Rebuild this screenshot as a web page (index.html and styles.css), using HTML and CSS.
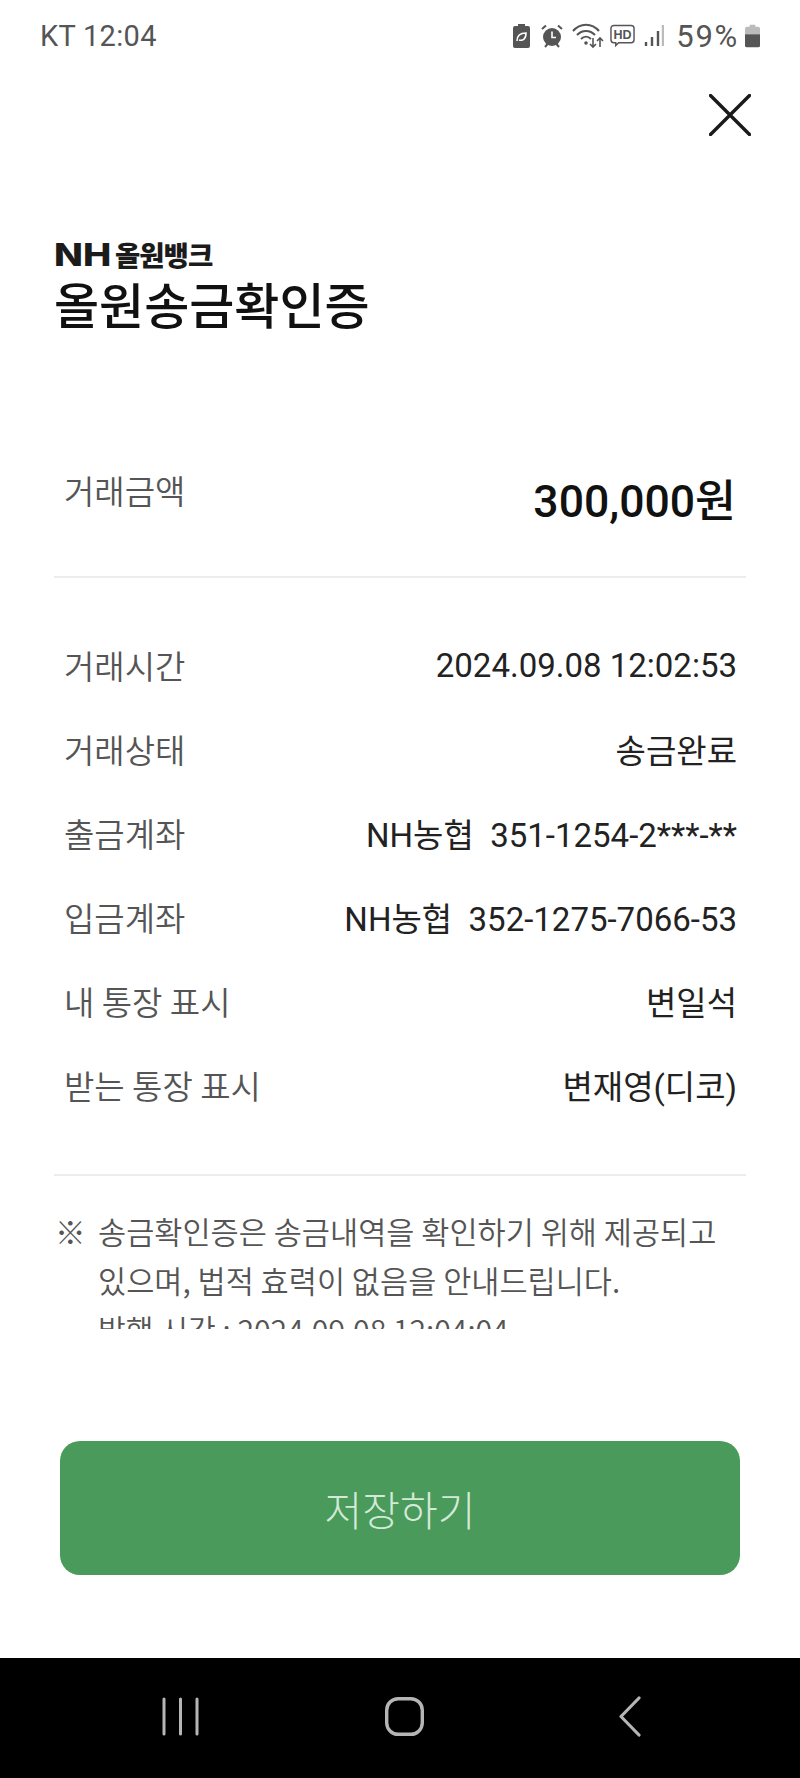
FILE: index.html
```html
<!DOCTYPE html>
<html>
<head>
<meta charset="UTF-8">
<title>올원송금확인증</title>
<link rel="stylesheet" href="styles.css">
</head>
<body>
<div class="screen">
  <div class="status">
    <span class="carrier">KT 12:04</span>
    <div class="status-icons">
      <svg class="ic ic-leaf" width="17" height="24" viewBox="0 0 17 24"><path d="M5 0h7v2h3a2 2 0 0 1 2 2v18a2 2 0 0 1-2 2H2a2 2 0 0 1-2-2V4a2 2 0 0 1 2-2h3z" fill="#555"/><path d="M4 17c0-5 3-8 9-8 0 6-3 8-7 7" fill="none" stroke="#fff" stroke-width="1.6"/></svg>
      <svg class="ic ic-clock" width="22" height="24" viewBox="0 0 22 24"><circle cx="11" cy="13" r="9" fill="#555"/><path d="M11 7.5v6h4" fill="none" stroke="#fff" stroke-width="1.6"/><path d="M1 5l4-3.500M21 5l-4-3.500M4 23l2.500-3M18 23l-2.500-3" stroke="#555" stroke-width="2"/></svg>
      <svg class="ic ic-wifi" width="32" height="26" viewBox="0 0 32 26"><path d="M1 8c7-8.500 19-8.500 26 0M5 12c5-5.500 13-5.500 18 0M9 16c3-3 7-3 10 0" fill="none" stroke="#555" stroke-width="2"/><circle cx="14" cy="20" r="1.8" fill="#555"/><path d="M21 15v9m-3-3 3 3 3-3M28 24v-9m-3 3 3-3 3 3" fill="none" stroke="#555" stroke-width="1.6"/></svg>
      <svg class="ic ic-hd" width="25" height="24" viewBox="0 0 26 24"><path d="M4 1h18a3 3 0 0 1 3 3v12a3 3 0 0 1-3 3H9l-3 3v-3H4a3 3 0 0 1-3-3V4a3 3 0 0 1 3-3z" fill="none" stroke="#555" stroke-width="1.5"/><text class="hd" x="13" y="15" text-anchor="middle">HD</text></svg>
      <svg class="ic ic-signal" width="20" height="22" viewBox="0 0 20 22"><path d="M2 17v4M8 12v9M14 6v15" stroke="#555" stroke-width="2.4"/><path d="M19 0v21" stroke="#bbb" stroke-width="2.4"/></svg>
      <span class="battery-text">59%</span>
      <svg class="ic" width="15" height="24" viewBox="0 0 16 24"><path d="M5 0h6v2h3a2 2 0 0 1 2 2v6H0V4a2 2 0 0 1 2-2h3z" fill="#bbb"/><path d="M0 10h16v12a2 2 0 0 1-2 2H2a2 2 0 0 1-2-2z" fill="#555"/></svg>
    </div>
  </div>

  <div class="close-row">
    <svg width="42" height="42" viewBox="0 0 42 42"><path d="M1.500 1.500l39 39M40.500 1.500l-39 39" stroke="#1a1a1a" stroke-width="3.4" stroke-linecap="round"/></svg>
  </div>

  <div class="head">
    <div class="logo"><span class="logo-nh">NH</span><span class="logo-ko">올원뱅크</span></div>
    <h1 class="title">올원송금확인증</h1>
  </div>

  <div class="amount-row">
    <span class="label">거래금액</span>
    <span class="amount">300,000원</span>
  </div>

  <div class="detail">
    <div class="row"><span class="label">거래시간</span><span class="value">2024.09.08 12:02:53</span></div>
    <div class="row"><span class="label">거래상태</span><span class="value">송금완료</span></div>
    <div class="row"><span class="label">출금계좌</span><span class="value">NH농협&nbsp; 351-1254-2***-**</span></div>
    <div class="row"><span class="label">입금계좌</span><span class="value">NH농협&nbsp; 352-1275-7066-53</span></div>
    <div class="row"><span class="label">내 통장 표시</span><span class="value">변일석</span></div>
    <div class="row"><span class="label">받는 통장 표시</span><span class="value">변재영(디코)</span></div>
  </div>

  <div class="note">
    <span class="note-mark">※</span>
    <p class="note-text">송금확인증은 송금내역을 확인하기 위해 제공되고 있으며, 법적 효력이 없음을 안내드립니다.<br><span class="note-time">발행 시간 : 2024.09.08 12:04:04</span></p>
  </div>

  <div class="btn-wrap"><div class="save-btn">저장하기</div></div>

  <div class="nav">
    <svg width="37" height="39" viewBox="0 0 37 39"><path d="M2 2v35M18.500 2v35M35 2v35" stroke="#b5b5b5" stroke-width="3" stroke-linecap="round"/></svg>
    <svg width="39" height="39" viewBox="0 0 39 39"><rect x="1.700" y="1.700" width="35.600" height="35.600" rx="11.500" fill="none" stroke="#b5b5b5" stroke-width="3.4"/></svg>
    <svg class="nav-back" width="22" height="41" viewBox="0 0 22 41"><path d="M20 2L2 20.500 20 39" fill="none" stroke="#b5b5b5" stroke-width="3.2" stroke-linecap="round" stroke-linejoin="round"/></svg>
  </div>
</div>
</body>
</html>
```

FILE: styles.css
```css
*{ margin: 0; padding: 0; box-sizing: border-box; }
body{ width: 800px; height: 1778px; background: #fff; overflow: hidden; font-family: "Noto Sans CJK KR", "Noto Sans", sans-serif; color: #222; }
.screen{ height: 1778px; display: flex; flex-direction: column; }

.status{ height: 72px; padding: 0 40px; display: flex; align-items: center; justify-content: space-between; color: #555; }
.carrier{ font-family: Roboto, sans-serif; font-size: 29px; letter-spacing: .3px; }
.status-icons{ display: flex; align-items: center; }
.ic{ display: block; }
.ic-leaf{ margin-right: 11px; }
.ic-clock, .ic-hd{ margin-right: 9px; }
.ic-wifi{ margin-right: 6px; }
.ic-signal{ margin-right: 12px; }
.hd{ font-family: "Liberation Sans", sans-serif; font-size: 13px; font-weight: bold; fill: #555; }
.battery-text{ font-family: Roboto, sans-serif; font-size: 31px; letter-spacing: 1.7px; margin-right: 6px; }

.close-row{ height: 42px; margin-top: 22px; display: flex; justify-content: flex-end; padding-right: 49px; }

.head{ padding: 0 54px; margin-top: 102px; }
.logo{ height: 32px; display: flex; align-items: center; color: #1b1b1b; }
.logo-nh{ width: 61px; font-family: Inter, sans-serif; font-size: 31px; font-weight: 800; transform: scaleX(1.22); transform-origin: left center; }
.logo-ko{ font-size: 27.5px; letter-spacing: -1px; font-weight: 900; }
.title{ font-size: 49px; line-height: 56px; font-weight: 500; color: #111; margin-top: 5px; }

.label{ font-size: 33px; color: #555; font-weight: 350; }
.amount-row{ margin: 137px 54px 0; padding: 0 10px; height: 110px; border-bottom: 2px solid #ececec; display: flex; justify-content: space-between; align-items: flex-start; }
.amount{ font-size: 44.5px; font-weight: 500; color: #111; line-height: 60px; margin-top: 4px; font-family: Roboto, "Noto Sans CJK KR", sans-serif; }
.amount-row .label{ line-height: 44px; }

.detail{ margin: 0 54px; padding: 65px 9px 0 10px; height: 598px; border-bottom: 2px solid #ececec; }
.row{ display: flex; justify-content: space-between; align-items: center; height: 44px; margin-bottom: 40px; }
.value{ font-size: 33px; color: #222; font-family: Roboto, "Noto Sans CJK KR", sans-serif; }

.note{ margin: 31px 54px 0; height: 122px; overflow: hidden; display: flex; color: #555; font-weight: 350; font-size: 30.6px; line-height: 49px; }
.note-mark{ width: 44px; flex: none; padding-left: 1px; }
.note-text{ flex: 1; }
.note-time{ font-size: 30.2px; }

.btn-wrap{ padding: 0 60px; margin-top: 112px; }
.save-btn{ height: 134px; background: #4a9a5c; border-radius: 20px; color: #d4ead9; font-size: 41px; font-weight: 300; display: flex; align-items: center; justify-content: center; }

.nav{ margin-top: auto; height: 120px; background: #000; display: flex; align-items: center; gap: 186px; padding: 0 0 4px 162px; }
.nav-back{ margin-left: 9px; }
```
